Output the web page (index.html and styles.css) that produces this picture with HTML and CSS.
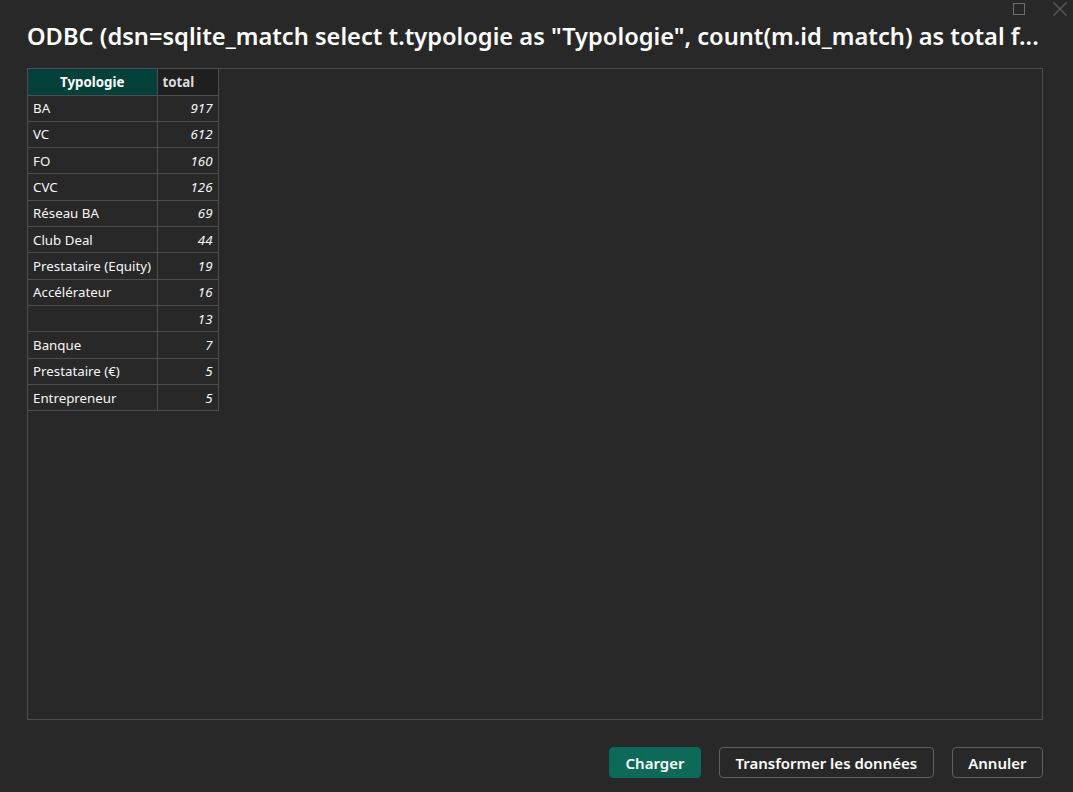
FILE: index.html
```html
<!DOCTYPE html>
<html lang="fr">
<head>
<meta charset="utf-8">
<title>ODBC</title>
<link rel="stylesheet" href="styles.css">
</head>
<body>
<div class="dialog">
  <div class="topbar">
    <svg class="winicon" width="14" height="14" viewBox="0 0 14 14"><rect x="1.5" y="1.5" width="11" height="11" fill="none" stroke="#6e6e6e" stroke-width="1"/></svg>
    <svg class="winicon" width="16" height="14" viewBox="0 0 16 14"><path d="M1.5 0.5 L14.5 13.5 M14.5 0.5 L1.5 13.5" stroke="#5e5e5e" stroke-width="1.2" fill="none"/></svg>
  </div>
  <h1 class="title">ODBC (dsn=sqlite_match select t.typologie as "Typologie", count(m.id_match) as total f...</h1>
  <div class="panel">
    <table class="grid">
      <colgroup><col class="c1"><col class="c2"></colgroup>
      <thead>
        <tr><th class="h-typ">Typologie</th><th class="h-tot">total</th></tr>
      </thead>
      <tbody>
        <tr><td>BA</td><td class="num">917</td></tr>
        <tr><td>VC</td><td class="num">612</td></tr>
        <tr><td>FO</td><td class="num">160</td></tr>
        <tr><td>CVC</td><td class="num">126</td></tr>
        <tr><td>Réseau BA</td><td class="num">69</td></tr>
        <tr><td>Club Deal</td><td class="num">44</td></tr>
        <tr><td>Prestataire (Equity)</td><td class="num">19</td></tr>
        <tr><td>Accélérateur</td><td class="num">16</td></tr>
        <tr><td></td><td class="num">13</td></tr>
        <tr><td>Banque</td><td class="num">7</td></tr>
        <tr><td>Prestataire (€)</td><td class="num">5</td></tr>
        <tr><td>Entrepreneur</td><td class="num">5</td></tr>
      </tbody>
    </table>
  </div>
  <div class="actions">
    <button class="btn primary">Charger</button>
    <button class="btn">Transformer les données</button>
    <button class="btn">Annuler</button>
  </div>
</div>
</body>
</html>
```
FILE: styles.css
```css
html, body {
  margin: 0;
  padding: 0;
  background: #282828;
}
body {
  width: 1073px;
  height: 792px;
  overflow: hidden;
  font-family: "Noto Sans", "Open Sans", sans-serif;
  color: #ffffff;
}
.dialog {
  display: flex;
  flex-direction: column;
}
.topbar {
  height: 20px;
  display: flex;
  justify-content: flex-end;
  align-items: flex-start;
  gap: 26px;
  padding: 2px 5px 0 0;
  box-sizing: border-box;
}
.winicon {
  display: block;
}
.title {
  margin: 0 0 0 27px;
  font-size: 23.65px;
  font-weight: 600;
  line-height: 32px;
  height: 48px;
  white-space: nowrap;
  color: #ffffff;
  letter-spacing: 0;
}
.panel {
  margin-left: 27px;
  width: 1016px;
  height: 652px;
  border: 1px solid #4e4e4e;
  box-sizing: border-box;
}
.grid {
  border-collapse: collapse;
  table-layout: fixed;
  width: 190px;
  font-size: 13.3px;
  font-family: "Noto Sans", "Open Sans", sans-serif;
}
.c1 { width: 129px; }
.c2 { width: 61px; }
.grid th, .grid td {
  border-right: 1px solid #4e4e4e;
  border-bottom: 1px solid #4e4e4e;
  height: 26.33px;
  padding: 0 5px;
  box-sizing: border-box;
  white-space: nowrap;
  overflow: hidden;
}
.grid th {
  height: 26px;
  font-weight: 700;
}
.grid td {
  color: #f6f6f6;
  font-weight: 400;
}
.grid td.num {
  text-align: right;
  font-style: italic;
}
.h-typ {
  background: #03403a;
  color: #ffffff;
  text-align: center;
}
.h-tot {
  background: #1f1f1f;
  color: #dcdcdc;
  text-align: left;
}
.actions {
  display: flex;
  justify-content: flex-end;
  gap: 18px;
  margin-top: 27px;
  padding-right: 30px;
}
.btn {
  height: 31px;
  padding: 0 15.5px;
  border: 1px solid #5f5f5f;
  border-radius: 4px;
  background: #282828;
  color: #ffffff;
  font-family: "Noto Sans", "Open Sans", sans-serif;
  font-size: 15px;
  font-weight: 600;
}
.btn.primary {
  background: #0d6a58;
  border-color: #0d6a58;
}
```
